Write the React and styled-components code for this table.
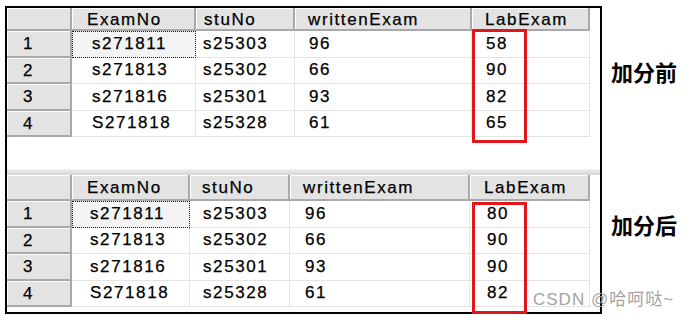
import styled, { createGlobalStyle } from 'styled-components';

const GlobalStyle = createGlobalStyle`
    body{
        margin: 0;
        background: #FFFFFF;
    }
    *{
        box-sizing: border-box;
    }
`

const before = {
    cols: [
        { w: 124, hp: 15, dp: 20 },
        { w: 99, hp: 8, dp: 7 },
        { w: 177, hp: 13, dp: 14 },
        { w: 118, hp: 13, dp: 14 },
    ],
    headHeight: 23,
    box: { top: 21, height: 114 },
    rows: [
        ["s271811", "s25303", "96", "58"],
        ["s271813", "s25302", "66", "90"],
        ["s271816", "s25301", "93", "82"],
        ["S271818", "s25328", "61", "65"],
    ],
};

const after = {
    cols: [
        { w: 118, hp: 15, dp: 18 },
        { w: 100, hp: 12, dp: 13 },
        { w: 180, hp: 13, dp: 15 },
        { w: 120, hp: 14, dp: 17 },
    ],
    headHeight: 26,
    box: { top: 27, height: 112 },
    rows: [
        ["s271811", "s25303", "96", "80"],
        ["s271813", "s25302", "66", "90"],
        ["s271816", "s25301", "93", "90"],
        ["S271818", "s25328", "61", "82"],
    ],
};

const headers = ["ExamNo", "stuNo", "writtenExam", "LabExam"];

function ResultGrid({ data }){
    const template = "65px " + data.cols.map(c => c.w + "px").join(" ");
    return(
        <TableWrap>
            <Grid template={template} head={data.headHeight}>
                <HeadCell />
                {headers.map((h, i) => <HeadCell key={h} pad={data.cols[i].hp}>{h}</HeadCell>)}
                {data.rows.map((row, r) => [
                    <RowHead key={"h" + r}>{r + 1}</RowHead>,
                    ...row.map((v, c) =>
                        <DataCell key={r + "-" + c} pad={data.cols[c].dp} focused={r === 0 && c === 0}>{v}</DataCell>
                    )
                ])}
            </Grid>
            <RedBox top={data.box.top} height={data.box.height} />
        </TableWrap>
    );
}

export default function App(){
    return(
    <Page>
        <GlobalStyle />
        <Frame>
            <ResultGrid data={before} />
            <Blank />
            <Splitter />
            <ResultGrid data={after} />
        </Frame>
        <Side>
            <Label first>加分前</Label>
            <Label>加分后</Label>
        </Side>
        <Watermark>CSDN @哈呵哒~</Watermark>
    </Page>
    );
}

const Page = styled.div`
    position: relative;
    width: 691px;
    height: 320px;
    padding: 6px 0 0 5px;
    display: flex;
    background: #FFFFFF;
`

const Frame = styled.div`
    width: 597px;
    height: 308px;
    border: 2px solid #000000;
    display: flex;
    flex-direction: column;
    padding-bottom: 4px;
`

const TableWrap = styled.div`
    position: relative;
`

const Grid = styled.div`
    display: grid;
    width: 583px;
    grid-template-columns: ${props => props.template};
    grid-template-rows: ${props => props.head}px repeat(4, 26.5px);
    font-family: 'Liberation Sans', Arial, sans-serif;
    font-size: 17px;
    letter-spacing: 1.6px;
    color: #000000;
    -webkit-text-stroke: 0.25px #000000;
`

const HeadCell = styled.div`
    display: flex;
    align-items: center;
    padding-left: ${props => props.pad || 0}px;
    background: #E3E3E3;
    box-shadow: inset -2px -2px 0 #A9A9A9, inset 1px 1px 0 #FFFFFF;
    white-space: nowrap;
    overflow: hidden;
`

const RowHead = styled.div`
    display: flex;
    align-items: center;
    padding-left: 16px;
    background: #E3E3E3;
    box-shadow: inset -2px -2px 0 #A9A9A9, inset 1px 1px 0 #FFFFFF;
`

const DataCell = styled.div`
    display: flex;
    align-items: center;
    padding-left: ${props => props.focused ? props.pad - 1 : props.pad}px;
    background: ${props => props.focused ? "#F3F3F3" : "#FFFFFF"};
    border-right: 1px solid #E4E4E4;
    border-bottom: 1px solid #E4E4E4;
    border: ${props => props.focused ? "1px dotted #1A1A1A" : undefined};
    white-space: nowrap;
`

const RedBox = styled.div`
    position: absolute;
    left: 465px;
    top: ${props => props.top}px;
    width: 55px;
    height: ${props => props.height}px;
    border: 3px solid #E3161B;
`

const Blank = styled.div`
    height: 32px;
`

const Splitter = styled.div`
    height: 6px;
    background: linear-gradient(#F0F0F0, #D6D6D6);
`

const Side = styled.div`
    display: flex;
    flex-direction: column;
    padding-left: 9px;
`

const Label = styled.div`
    margin-top: ${props => props.first ? "54px" : "131px"};
    font-family: 'Noto Sans CJK SC', sans-serif;
    font-weight: 700;
    font-size: 22px;
    line-height: 22px;
    color: #000000;
`

const Watermark = styled.div`
    position: absolute;
    left: 533px;
    top: 291px;
    font-family: 'Liberation Sans', 'Noto Sans CJK SC', sans-serif;
    font-size: 17px;
    line-height: 17px;
    letter-spacing: 1px;
    color: #A3A3A3;
    white-space: nowrap;
`
